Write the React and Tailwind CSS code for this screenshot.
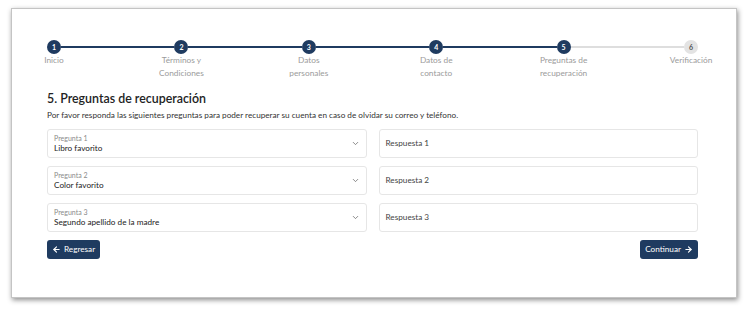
import React from 'react';
import { ArrowLeft, ArrowRight, ChevronDown } from 'lucide-react';

const steps = [
  { n: 1, label: ['Inicio'] },
  { n: 2, label: ['Términos y', 'Condiciones'] },
  { n: 3, label: ['Datos', 'personales'] },
  { n: 4, label: ['Datos de', 'contacto'] },
  { n: 5, label: ['Preguntas de', 'recuperación'] },
  { n: 6, label: ['Verificación'] },
];

const current = 5;

const questions = [
  { label: 'Pregunta 1', value: 'Libro favorito', answer: 'Respuesta 1' },
  { label: 'Pregunta 2', value: 'Color favorito', answer: 'Respuesta 2' },
  { label: 'Pregunta 3', value: 'Segundo apellido de la madre', answer: 'Respuesta 3' },
];

function Stepper() {
  return (
    <div className="flex items-start">
      {steps.map((step, i) => {
        const done = step.n <= current;
        return (
          <React.Fragment key={step.n}>
            {i > 0 && (
              <div
                className={
                  'flex-1 h-[2px] mt-[6px] ' +
                  (done ? 'bg-[#1f3b60]' : 'bg-[#dedede]')
                }
              />
            )}
            <div className="w-[14px] flex flex-col items-center">
              <div
                className={
                  'w-[14px] h-[14px] rounded-full flex items-center justify-center text-[7px] font-bold leading-none ' +
                  (done ? 'bg-[#1f3b60] text-white' : 'bg-[#e3e3e3] text-[#555]')
                }
              >
                {step.n}
              </div>
              <div className="text-[8.3px] leading-[13px] text-[#9b9b9b] text-center whitespace-nowrap">
                {step.label.map((l) => (
                  <div key={l}>{l}</div>
                ))}
              </div>
            </div>
          </React.Fragment>
        );
      })}
    </div>
  );
}

export default function App() {
  return (
    <div className="bg-white min-h-[314px] pl-[11px] pt-[8px] font-['Lato',sans-serif]">
      <div className="w-[726px] h-[290px] bg-white border border-[#c4c4c4] shadow-[1px_2px_5px_rgba(0,0,0,0.45)] pt-[31px] pl-[35px] pr-[38px]">
        <Stepper />

        <h2 className="mt-[10px] text-[12.4px] leading-[18px] font-semibold text-[#222]">
          5. Preguntas de recuperación
        </h2>
        <p className="mt-[1px] text-[8.2px] leading-[12px] text-[#333]">
          Por favor responda las siguientes preguntas para poder recuperar su cuenta en caso de olvidar su correo y teléfono.
        </p>

        <div className="mt-[8px] flex flex-col gap-[8px]">
          {questions.map((q) => (
            <div key={q.label} className="grid grid-cols-2 gap-[12px]">
              <div className="h-[29px] border border-[#e6e6e6] rounded-[3px] pl-[6px] pr-[6px] flex items-center justify-between">
                <div className="flex flex-col">
                  <span className="text-[7px] leading-[9px] text-[#8a8a8a]">{q.label}</span>
                  <span className="text-[8.2px] leading-[11px] text-[#222]">{q.value}</span>
                </div>
                <ChevronDown size={9} strokeWidth={2} className="text-[#666]" />
              </div>
              <div className="h-[29px] border border-[#e6e6e6] rounded-[3px] pl-[6px] flex items-center text-[8.2px] text-[#444]">
                {q.answer}
              </div>
            </div>
          ))}
        </div>

        <div className="mt-[8px] flex justify-between">
          <button className="h-[19px] px-[5px] bg-[#1f3b60] rounded-[3px] text-white text-[8.2px] flex items-center gap-[3px]">
            <ArrowLeft size={9} strokeWidth={3} />
            Regresar
          </button>
          <button className="h-[19px] px-[5px] bg-[#1f3b60] rounded-[3px] text-white text-[8.2px] flex items-center gap-[3px]">
            Continuar
            <ArrowRight size={9} strokeWidth={3} />
          </button>
        </div>
      </div>
    </div>
  );
}
